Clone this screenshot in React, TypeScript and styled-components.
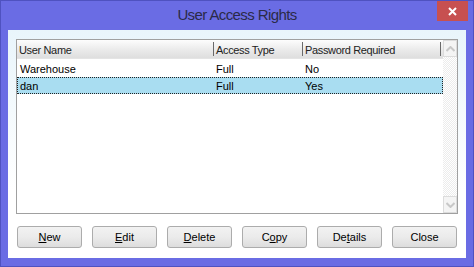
import styled, { createGlobalStyle } from 'styled-components';

const Global = createGlobalStyle`
  html, body {
    margin: 0;
    padding: 0;
    background: #6a6ce4;
  }
  * {
    box-sizing: border-box;
  }
`;

const Window = styled.div`
  width: 474px;
  height: 267px;
  display: flex;
  flex-direction: column;
  background: #6a6ce4;
  border: 1px solid #4f52c0;
  font-family: 'Liberation Sans', Arial, sans-serif;
`;

const TitleBar = styled.div`
  height: 29px;
  display: grid;
  grid-template-columns: 1fr auto 1fr;
  align-items: start;
`;

const Title = styled.div`
  grid-column: 2;
  padding-top: 5px;
  font-size: 15px;
  letter-spacing: -0.6px;
  color: #2a2a48;
`;

const CloseButton = styled.button`
  grid-column: 3;
  justify-self: end;
  margin-right: 5px;
  width: 31px;
  height: 20px;
  border: none;
  padding: 0;
  background: #c75050;
  display: flex;
  align-items: center;
  justify-content: center;
`;

const Client = styled.div`
  flex: 1;
  margin: 0 7px 8px;
  background: linear-gradient(#e9f5fb, #ffffff 70%);
  padding: 9px 8px 10px;
  display: flex;
  flex-direction: column;
`;

const ListBox = styled.div`
  height: 175px;
  border: 1px solid #a0a0a0;
  background: #fff;
  display: flex;
`;

const ListMain = styled.div`
  flex: 1;
  display: flex;
  flex-direction: column;
`;

const columns = '196px 89px 138px 1fr';

const HeaderRow = styled.div`
  height: 19px;
  margin-bottom: 1px;
  display: grid;
  grid-template-columns: ${columns};
  background: linear-gradient(#fdfdfd, #ececec 50%, #dedede);
  border-bottom: 1px solid #e4e4e4;
`;

const HeaderCell = styled.div<{ $sep?: boolean }>`
  display: flex;
  align-items: center;
  padding: 2px 0 0 2px;
  margin: 2px 0 4px;
  font-size: 11px;
  letter-spacing: -0.35px;
  color: #222;
  white-space: nowrap;
  border-left: ${(p) => (p.$sep ? '1px solid #6a6a6a' : 'none')};
`;

const Row = styled.div<{ $selected?: boolean }>`
  height: 17px;
  display: grid;
  grid-template-columns: ${columns};
  align-items: center;
  font-size: 11px;
  color: #000;
  background: ${(p) => (p.$selected ? '#a9ddf1' : 'transparent')};
  border: 1px dotted ${(p) => (p.$selected ? '#222' : 'transparent')};
`;

const Cell = styled.div`
  padding-left: 2px;
`;

const ScrollBar = styled.div`
  width: 17px;
  display: flex;
  flex-direction: column;
  justify-content: space-between;
  background: repeating-conic-gradient(#ffffff 0 25%, #ececec 0 50%) 0 0 / 2px 2px;
`;

const ScrollButton = styled.div`
  height: 17px;
  border: 1px solid #dcdcdc;
  background: #f4f4f4;
  display: flex;
  align-items: center;
  justify-content: center;
`;

const ButtonRow = styled.div`
  margin-top: 12px;
  padding: 0 1px;
  display: flex;
  gap: 10px;
`;

const Button = styled.button`
  width: 65px;
  height: 22px;
  border: 1px solid #acacac;
  border-radius: 3px;
  background: linear-gradient(#f2f2f2, #ebebeb 50%, #dddddd);
  font-family: 'Liberation Sans', Arial, sans-serif;
  font-size: 11px;
  color: #000;
  padding: 0;
`;

const Key = styled.span`
  text-decoration: underline;
`;

const Chevron = ({ up }: { up?: boolean }) => (
  <svg width="9" height="6" viewBox="0 0 9 6">
    <path
      d={up ? 'M0.5 5 L4.5 1 L8.5 5' : 'M0.5 1 L4.5 5 L8.5 1'}
      fill="none"
      stroke="#c8c8c8"
      strokeWidth="2"
    />
  </svg>
);

const rows = [
  { name: 'Warehouse', type: 'Full', pw: 'No' },
  { name: 'dan', type: 'Full', pw: 'Yes', selected: true },
];

export default function App() {
  return (
    <>
      <Global />
      <Window>
        <TitleBar>
          <Title>User Access Rights</Title>
          <CloseButton>
            <svg width="9" height="9" viewBox="0 0 9 9">
              <path d="M1 1 L8 8 M8 1 L1 8" stroke="#fff" strokeWidth="2" />
            </svg>
          </CloseButton>
        </TitleBar>
        <Client>
          <ListBox>
            <ListMain>
              <HeaderRow>
                <HeaderCell>User Name</HeaderCell>
                <HeaderCell $sep>Access Type</HeaderCell>
                <HeaderCell $sep>Password Required</HeaderCell>
                <HeaderCell $sep />
              </HeaderRow>
              {rows.map((r) => (
                <Row key={r.name} $selected={r.selected}>
                  <Cell>{r.name}</Cell>
                  <Cell>{r.type}</Cell>
                  <Cell>{r.pw}</Cell>
                </Row>
              ))}
            </ListMain>
            <ScrollBar>
              <ScrollButton>
                <Chevron up />
              </ScrollButton>
              <ScrollButton>
                <Chevron />
              </ScrollButton>
            </ScrollBar>
          </ListBox>
          <ButtonRow>
            <Button>
              <Key>N</Key>ew
            </Button>
            <Button>
              <Key>E</Key>dit
            </Button>
            <Button>
              <Key>D</Key>elete
            </Button>
            <Button>
              C<Key>o</Key>py
            </Button>
            <Button>
              De<Key>t</Key>ails
            </Button>
            <Button>Close</Button>
          </ButtonRow>
        </Client>
      </Window>
    </>
  );
}
